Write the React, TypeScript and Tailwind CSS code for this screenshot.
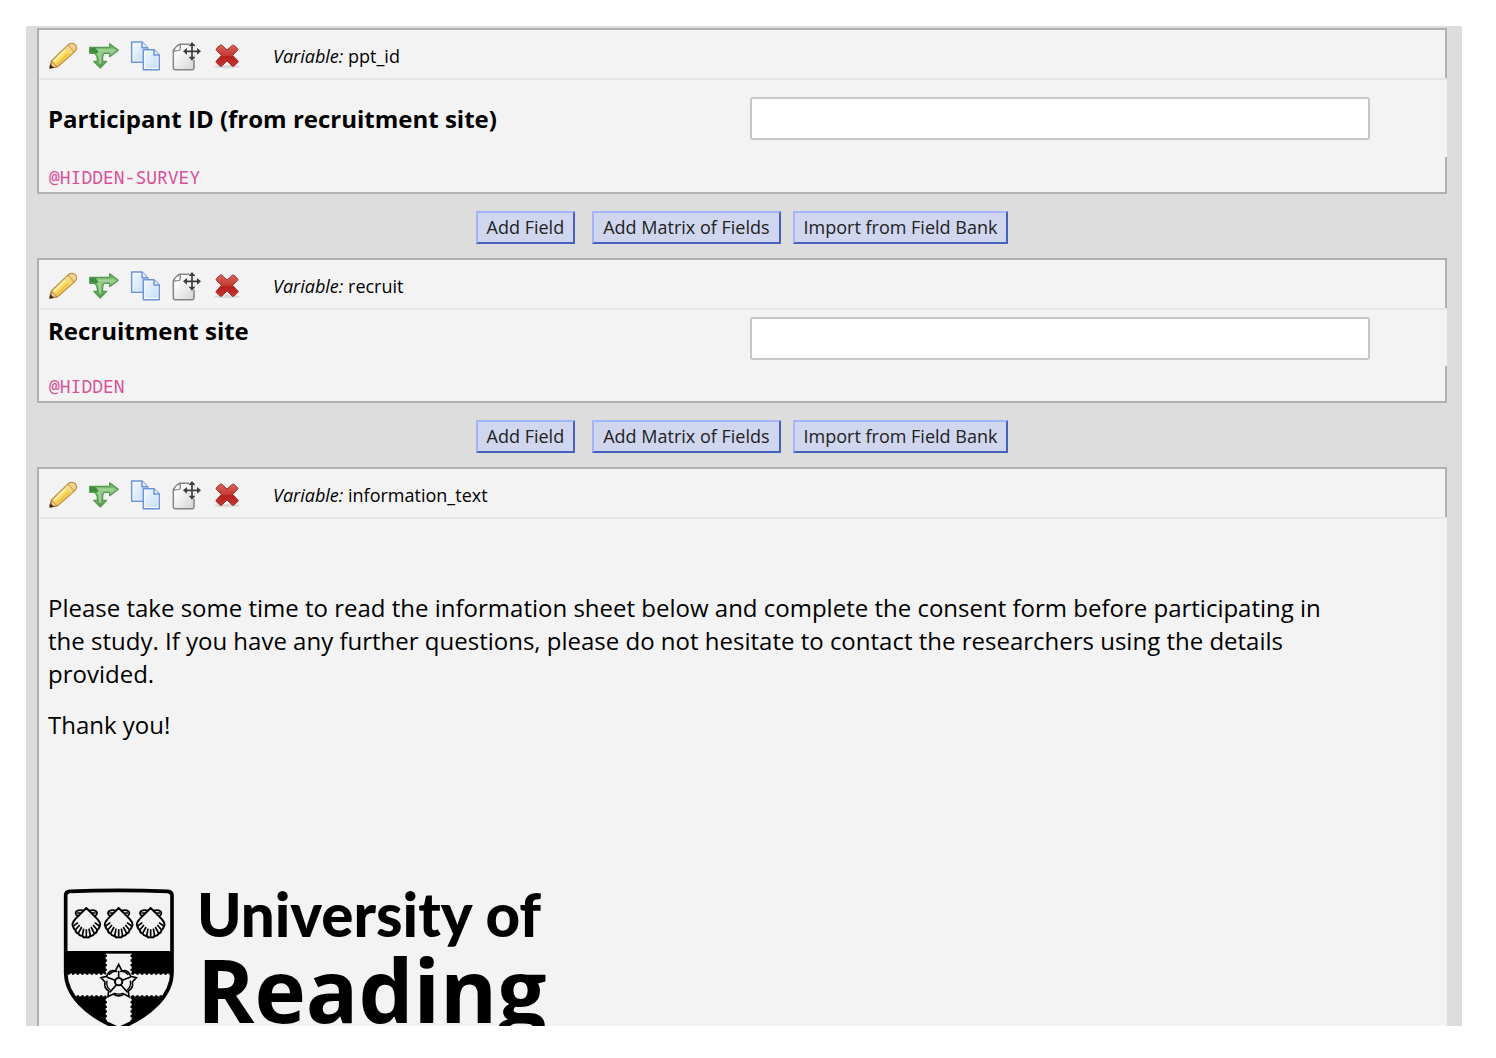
import type { ReactNode } from "react";

function PencilIcon() {
  return (
    <svg viewBox="84 66 90 90" className="size-[30px]" aria-hidden="true">
      <defs>
        <linearGradient id="pencil-body" x1="0" y1="0" x2="1" y2="1">
          <stop offset="0.25" stopColor="#fbe795" />
          <stop offset="0.5" stopColor="#fbdc5c" />
          <stop offset="0.8" stopColor="#e6b04a" />
        </linearGradient>
      </defs>
      <path d="M90 146 L94 126 L145 77 Q154 70 163 75 Q172 81 169 91 L162 100 L112 144 Z" fill="url(#pencil-body)" stroke="#c08d42" strokeWidth="3.5" strokeLinejoin="round" />
      <path d="M95 127 L111 143 L91 147 Z" fill="#ecc99b" stroke="#9a6a35" strokeWidth="2.5" />
      <path d="M89 148 L91 137 L101 146 Z" fill="#3c2812" stroke="#3c2812" strokeWidth="2" />
      <path d="M144 78 L162 98" stroke="#c58c45" strokeWidth="3" />
      <path d="M148 79 Q155 72 162 77 Q169 83 166 91 L162 96 Z" fill="#efd0a5" />
      <path d="M138 85 L155 104" stroke="#d8d8d0" strokeWidth="4" />
      <path d="M102 127 L135 95" stroke="#fff3b5" strokeWidth="5" />
      <path d="M110 136 L145 103" stroke="#e5a72c" strokeWidth="2.5" />
    </svg>
  );
}

function BranchIcon() {
  return (
    <svg viewBox="207 66 90 90" className="size-[30px]" aria-hidden="true">
      <defs>
        <linearGradient id="branch-fill" x1="0" y1="0" x2="0" y2="1">
          <stop offset="0" stopColor="#5aa552" />
          <stop offset="0.35" stopColor="#94cc87" />
          <stop offset="1" stopColor="#4c9a48" />
        </linearGradient>
      </defs>
      <path d="M209 85 H269 V74 L295 94 L269 113 V103 H253 Q247 107 248 127 H260 L241 147 L221 127 H232 Q233 108 222 103 H209 Z" fill="url(#branch-fill)" stroke="#55994f" strokeWidth="3.5" strokeLinejoin="round" />
      <path d="M232 94 H283 M235 101 Q242 107 240 134" fill="none" stroke="#a5d69a" strokeWidth="5" />
      <path d="M210 87 H226 L236 99 L229 104 L222 101 H210 Z" fill="#3f8a3f" />
    </svg>
  );
}

function CopyIcon() {
  return (
    <svg viewBox="330 66 90 90" className="size-[30px]" aria-hidden="true">
      <defs>
        <linearGradient id="copy-fill" x1="0" y1="0" x2="1" y2="1">
          <stop offset="0" stopColor="#f0f7ff" />
          <stop offset="1" stopColor="#c5def8" />
        </linearGradient>
      </defs>
      <g stroke="#6b93d6" strokeWidth="4.5" strokeLinejoin="round">
        <path d="M335 69 H366 L383 86 V130 H335 Z" fill="#fff" />
        <path d="M340 74 H362 L378 90 V125 H340 Z" fill="url(#copy-fill)" stroke="none" />
        <path d="M366 69 V86 H383" fill="#e8f1fd" />
        <path d="M370 92 H402 L418 108 V152 H370 Z" fill="#fff" />
        <path d="M375 97 H399 L413 111 V147 H375 Z" fill="url(#copy-fill)" stroke="none" />
        <path d="M402 92 V108 H418" fill="#e8f1fd" />
      </g>
    </svg>
  );
}

function MoveIcon() {
  return (
    <svg viewBox="453 66 90 90" className="size-[30px]" aria-hidden="true">
      <defs>
        <linearGradient id="move-fill" x1="0" y1="0" x2="1" y2="1">
          <stop offset="0.2" stopColor="#fff" />
          <stop offset="1" stopColor="#d4d4d4" />
        </linearGradient>
      </defs>
      <path d="M478 76 H522 V147 Q522 152 517 152 H465 Q460 152 460 147 V94 Z" fill="url(#move-fill)" stroke="#858585" strokeWidth="4.5" strokeLinejoin="round" />
      <path d="M461 96 Q464 84 478 77 Q483 75 480 93 Q474 96 461 96" fill="#fff" stroke="#858585" strokeWidth="4" />
      <path d="M486 97 H541 M516 71 V123" stroke="#f3f3f3" strokeWidth="16" />
      <path d="M495 97 H537 M516 76 V119" stroke="#3d3d3d" strokeWidth="5" />
      <path d="M516 69 L526 81 H506 Z M516 125 L526 113 H506 Z M489 97 L501 87 V107 Z M543 97 L531 87 V107 Z" fill="#3d3d3d" />
    </svg>
  );
}

function DeleteIcon() {
  return (
    <svg viewBox="576 66 90 90" className="size-[30px]" aria-hidden="true">
      <defs>
        <linearGradient id="delete-fill" x1="0" y1="0" x2="0" y2="1">
          <stop offset="0" stopColor="#d9655c" />
          <stop offset="0.5" stopColor="#c33a33" />
          <stop offset="0.55" stopColor="#b3201d" />
          <stop offset="1" stopColor="#c43932" />
        </linearGradient>
      </defs>
      <ellipse cx="621" cy="143" rx="38" ry="5" fill="#d9d9d9" />
      <path d="M590 88 L601 78 Q603 77 606 79 L621 93 L637 79 Q639 77 642 79 L653 89 Q655 91 653 94 L638 109 L654 126 Q656 129 653 131 L642 141 Q639 143 636 141 L621 126 L606 141 Q603 143 600 141 L589 131 Q587 128 589 126 L604 109 L589 94 Q587 91 590 88 Z" fill="url(#delete-fill)" stroke="#a8312b" strokeWidth="3" />
    </svg>
  );
}

const actions: { label: string; icon: ReactNode }[] = [
  { label: "Edit", icon: <PencilIcon /> },
  { label: "Branching logic", icon: <BranchIcon /> },
  { label: "Copy", icon: <CopyIcon /> },
  { label: "Move", icon: <MoveIcon /> },
  { label: "Delete", icon: <DeleteIcon /> },
];

function FieldHeader({ variable }: { variable: string }) {
  return (
    <header className="flex h-[50px] items-center border-t-2 border-r-2 border-[#b0b0b0] pt-1 pl-[9px]">
      <div className="flex gap-[11px]">
        {actions.map((a) => (
          <button key={a.label} type="button" aria-label={a.label} className="block">
            {a.icon}
          </button>
        ))}
      </div>
      <p className="ml-[31px] text-[18px] leading-6">
        <i>Variable:</i> {variable}
      </p>
    </header>
  );
}

function FieldCard({ variable, label, tag, bodyClass }: { variable: string; label: string; tag: string; bodyClass: string }) {
  return (
    <section className="border-l-2 border-[#b0b0b0] bg-[#f3f3f3]">
      <FieldHeader variable={variable} />
      <div className={bodyClass}>
        <label htmlFor={variable} className="w-[50.5%] pl-[9px] text-[24px] leading-7 font-bold">
          {label}
        </label>
        <input id={variable} type="text" className="h-[43px] w-[44%] rounded-[3px] border-2 border-[#c6c6c6] bg-white px-2 text-[24px]" />
      </div>
      <footer className="h-[37px] border-r-2 border-b-2 border-[#b0b0b0] pt-2 pl-[10px]">
        <code className="block font-['Noto_Sans_Mono','DejaVu_Sans_Mono',monospace] text-[18px] leading-6 text-[#d9509a]">{tag}</code>
      </footer>
    </section>
  );
}

function AddButton({ children }: { children: ReactNode }) {
  return (
    <button type="button" className="h-[33px] border-2 border-t-[#a3b4f8] border-r-[#4560bd] border-b-[#4560bd] border-l-[#a3b4f8] bg-[#cfd6ee] px-[9px] text-[18px] leading-6 text-[#222]">
      {children}
    </button>
  );
}

function AddBar() {
  return (
    <div className="flex h-16 items-center justify-center pt-[2px]">
      <AddButton>Add Field</AddButton>
      <span className="w-[17px]" />
      <AddButton>Add Matrix of Fields</AddButton>
      <span className="w-3" />
      <AddButton>Import from Field Bank</AddButton>
    </div>
  );
}

function Shell({ x }: { x: number }) {
  return (
    <g transform={`translate(${x} 0)`} fill="none" stroke="#000" strokeLinejoin="round">
      <path d="M-7 108 Q-27 103 -32 113 Q-33 121 -25 124 M7 108 Q27 103 32 113 Q33 121 25 124 M-28 115 H-17 M28 115 H17" strokeWidth="5" />
      <path d="M0 100 L-32 132 Q-46 148 -40 155 Q-38 163 -33 166 Q-31 175 -24 177 Q-20 185 -12 184 Q-6 191 0 187 Q6 191 12 184 Q20 185 24 177 Q31 175 33 166 Q38 163 40 155 Q46 148 32 132 Z" fill="#f3f3f3" strokeWidth="6" />
      <path d="M0 186 V164 M-12 184 L-8 162 M12 184 L8 162 M-24 176 L-14 157 M24 176 L14 157 M-33 166 L-20 151 M33 166 L20 151 M-39 154 L-25 144 M39 154 L25 144" strokeWidth="5" />
    </g>
  );
}

function ShieldLogo() {
  return (
    <svg viewBox="130 40 336 432" className="h-36 w-28 shrink-0" aria-hidden="true">
      <defs>
        <clipPath id="shield-clip">
          <path d="M140 60 Q140 53 150 52 Q297 46 444 52 Q455 53 455 60 V292 C455 362 395 422 297 460 C199 422 139 362 140 292 Z" />
        </clipPath>
      </defs>
      <g clipPath="url(#shield-clip)">
        <rect x="130" y="229" width="336" height="250" fill="#000" />
        <rect x="258" y="237" width="78" height="240" fill="#f3f3f3" />
        <rect x="130" y="297" width="336" height="68" fill="#f3f3f3" />
        <path d="M143 297 H258 M336 297 H455 M143 365 H258 M336 365 H455" stroke="#000" strokeWidth="7" strokeDasharray="7 7" />
        <path d="M258 240 V297 M336 240 V297 M258 365 V460 M336 365 V460" stroke="#000" strokeWidth="7" strokeDasharray="7 7" />
      </g>
      <path d="M138 62 Q138 51 150 50 Q297 44 444 50 Q457 51 457 62 V292 C457 362 395 422 297 462 C199 422 138 362 138 292 Z" fill="none" stroke="#000" strokeWidth="11" />
      <Shell x={200} />
      <Shell x={297} />
      <Shell x={393} />
      <g fill="none" stroke="#000" strokeWidth="5">
        <path d="M297 269 L307 289 Q325 283 333 305 L350 309 L338 322 Q342 340 326 349 L328 366 L313 358 Q297 369 281 358 L265 366 L267 349 Q252 340 256 322 L244 309 L261 305 Q269 283 287 289 Z" fill="#f3f3f3" />
        <path d="M297 288 V312 M333 307 L308 317 M324 353 L304 331 M270 353 L290 331 M261 307 L286 317" />
        <circle cx="297" cy="321" r="11" strokeWidth="6" />
        <path d="M268 300 Q282 286 293 291 M301 291 Q312 286 326 300 M332 318 Q335 338 322 346 M272 346 Q259 338 262 318 M283 355 Q297 362 311 355" strokeWidth="4" />
      </g>
    </svg>
  );
}

export default function App() {
  return (
    <div className="h-screen overflow-hidden bg-white py-[26px] pr-[34px] pb-8 pl-[26px] font-['Open_Sans','Noto_Sans',sans-serif] text-black">
      <main className="h-full overflow-hidden bg-[#ddd] pt-[2px] pr-[15px] pl-[11px]">
        <FieldCard
          variable="ppt_id"
          label="Participant ID (from recruitment site)"
          tag="@HIDDEN-SURVEY"
          bodyClass="flex h-[79px] items-center border-t-2 border-[#e6e6e6]"
        />
        <AddBar />
        <FieldCard
          variable="recruit"
          label="Recruitment site"
          tag="@HIDDEN"
          bodyClass="flex h-[58px] items-start border-t-2 border-[#e6e6e6] pt-[7px]"
        />
        <AddBar />
        <section className="border-l-2 border-[#b0b0b0] bg-[#f3f3f3]">
          <FieldHeader variable="information_text" />
          <div className="border-t-2 border-[#e6e6e6] pt-[72px] pr-[100px] pl-[9px] text-[24px] leading-[33px]">
            <p>
              Please take some time to read the information sheet below and complete the consent form before participating in
              the study. If you have any further questions, please do not hesitate to contact the researchers using the details
              provided.
            </p>
            <p className="mt-[18px]">Thank you!</p>
            <div className="mt-[147px] flex pl-[15px]">
              <ShieldLogo />
              <div className="ml-[22px] whitespace-nowrap">
                <p className="font-['Lato','Open_Sans',sans-serif] text-[60px] leading-[52px] font-black">University of</p>
                <p className="text-[87px] leading-[98px] font-bold">Reading</p>
              </div>
            </div>
          </div>
        </section>
      </main>
    </div>
  );
}
